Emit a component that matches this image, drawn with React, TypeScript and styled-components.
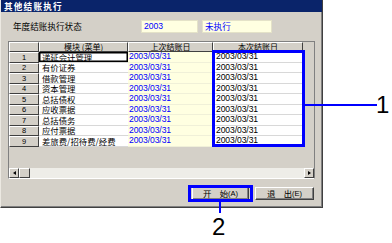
import React from "react";
import styled, {createGlobalStyle} from "styled-components";

const GlobalStyle = createGlobalStyle`
  html, body {
    margin: 0;
    padding: 0;
    background: #ffffff;
  }
  body {
    font-family: "Noto Sans CJK SC", "Liberation Sans", sans-serif;
  }
`;

const cjk = `"Noto Sans CJK SC", "Liberation Sans", sans-serif`;
const latin = `"Liberation Sans", "Noto Sans CJK SC", sans-serif`;
const face = "#d4d0c8";
const annotation = "#0000ff";

const modules = [
    "递延会计管理",
    "有价证券",
    "借款管理",
    "资本管理",
    "总括债权",
    "应收票据",
    "总括债务",
    "应付票据",
    "差旅费/招待费/经费",
];

const Stage = styled.div`
  position: relative;
  width: 392px;
  height: 243px;
  overflow: hidden;
`;

const Window = styled.div`
  box-sizing: border-box;
  width: 323px;
  height: 208px;
  display: flex;
  flex-direction: column;
  background: ${face};
  border-left: 1px solid #ece9e2;
  border-right: 1px solid #404040;
  border-bottom: 1px solid #404040;
  box-shadow: inset -1px -1px 0 #808080;
`;

const TitleBar = styled.div`
  height: 12px;
  flex: none;
  display: flex;
  align-items: center;
  padding-left: 3px;
  background: #0a246a;
  color: #ffffff;
  font-family: ${cjk};
  font-weight: bold;
  font-size: 8.6px;
  line-height: 1;
  letter-spacing: 1.2px;
`;

const Body = styled.div`
  display: flex;
  flex-direction: column;
  padding: 8px 7px 0 7px;
`;

const StatusRow = styled.div`
  display: flex;
  align-items: center;
  height: 13px;
`;

const StatusLabel = styled.div`
  width: 133px;
  padding-left: 5px;
  box-sizing: border-box;
  font-family: ${cjk};
  font-size: 8.6px;
  line-height: 1;
  color: #000000;
  white-space: nowrap;
`;

const StatusField = styled.div<{ $width: number; $latin?: boolean }>`
  box-sizing: border-box;
  width: ${p => p.$width}px;
  height: 13px;
  margin-right: 4px;
  padding-left: 2px;
  display: flex;
  align-items: center;
  background: #ffffe1;
  border: 1px solid #e4e2c8;
  color: #0000ff;
  font-family: ${p => p.$latin ? latin : cjk};
  font-size: 8.6px;
  line-height: 1;
  white-space: nowrap;
`;

const Grid = styled.div`
  box-sizing: border-box;
  margin-top: 8px;
  width: 307px;
  height: 138px;
  display: flex;
  flex-direction: column;
  background: ${face};
  border-top: 1px solid #808080;
  border-left: 1px solid #808080;
  border-right: 1px solid #808080;
  border-bottom: 1px solid #ffffff;
`;

const Table = styled.div`
  display: grid;
  grid-template-columns: 30px 89px 85px 90px;
  grid-template-rows: 10px repeat(9, 10.5px);
`;

const HeaderCell = styled.div`
  box-sizing: border-box;
  display: flex;
  align-items: center;
  justify-content: center;
  background: ${face};
  border-top: 1px solid #ffffff;
  border-left: 1px solid #ffffff;
  border-right: 1px solid #404040;
  border-bottom: 1px solid #404040;
  font-family: ${cjk};
  font-size: 8px;
  line-height: 1;
  color: #000000;
  white-space: nowrap;
  overflow: hidden;
`;

const RowNumber = styled(HeaderCell)`
  font-family: ${latin};
  font-size: 7.5px;
`;

const ModuleCell = styled.div<{ $focused?: boolean }>`
  box-sizing: border-box;
  display: flex;
  align-items: center;
  padding-left: 3px;
  background: #ffffff;
  border-bottom: 1px solid #d8d8d8;
  box-shadow: ${p => p.$focused ? "inset 0 0 0 1.5px #000000" : "none"};
  font-family: ${cjk};
  font-size: 8.4px;
  line-height: 1;
  color: #000000;
  white-space: nowrap;
  overflow: hidden;
`;

const DateCell = styled.div<{ $previous?: boolean }>`
  box-sizing: border-box;
  display: flex;
  align-items: center;
  padding-left: ${p => p.$previous ? 1 : 3}px;
  background: ${p => p.$previous ? "#ffffe1" : "#ffffff"};
  border-bottom: 1px solid ${p => p.$previous ? "#f0f0d8" : "#d8d8d8"};
  color: ${p => p.$previous ? "#0000ff" : "#000000"};
  font-family: ${latin};
  font-size: 8.6px;
  line-height: 1;
  letter-spacing: -0.1px;
  white-space: nowrap;
`;

const Filler = styled.div`
  flex: 1;
`;

const ScrollBar = styled.div`
  height: 10px;
  display: flex;
  background: #eeede8;
`;

const ScrollButton = styled.div<{ $dir: "left" | "right" }>`
  box-sizing: border-box;
  width: 10px;
  height: 10px;
  display: flex;
  align-items: center;
  justify-content: center;
  background: ${face};
  border-top: 1px solid #ffffff;
  border-left: 1px solid #ffffff;
  border-right: 1px solid #404040;
  border-bottom: 1px solid #404040;

  &::after {
    content: "";
    width: 0;
    height: 0;
    border-top: 2.5px solid transparent;
    border-bottom: 2.5px solid transparent;
    ${p => p.$dir === "left" ? "border-right: 3px solid #000;" : "border-left: 3px solid #000;"}
  }
`;

const ScrollThumb = styled.div`
  box-sizing: border-box;
  width: 11px;
  height: 10px;
  background: ${face};
  border-top: 1px solid #ffffff;
  border-left: 1px solid #ffffff;
  border-right: 1px solid #404040;
  border-bottom: 1px solid #404040;
`;

const ScrollTrack = styled.div`
  flex: 1;
`;

const ButtonRow = styled.div`
  display: flex;
  justify-content: flex-end;
  gap: 6px;
  margin-top: 8px;
  margin-right: 1px;
`;

const DialogButton = styled.button<{ $width: number }>`
  box-sizing: border-box;
  width: ${p => p.$width}px;
  height: 13px;
  padding: 0;
  margin: 0;
  display: flex;
  align-items: center;
  justify-content: center;
  background: ${face};
  border-top: 1px solid #ffffff;
  border-left: 1px solid #ffffff;
  border-right: 1px solid #404040;
  border-bottom: 1px solid #404040;
  box-shadow: inset -1px -1px 0 #808080;
  font-family: ${cjk};
  font-size: 8.4px;
  line-height: 1;
  color: #000000;
  white-space: pre;
`;

const Hotkey = styled.span`
  font-family: ${latin};
  font-size: 7.5px;
`;

const Callout = styled.div<{ $x: number; $y: number; $w: number; $h: number }>`
  position: absolute;
  box-sizing: border-box;
  left: ${p => p.$x}px;
  top: ${p => p.$y}px;
  width: ${p => p.$w}px;
  height: ${p => p.$h}px;
  border: 3px solid ${annotation};
`;

const Leader = styled.div<{ $x: number; $y: number; $w: number; $h: number }>`
  position: absolute;
  left: ${p => p.$x}px;
  top: ${p => p.$y}px;
  width: ${p => p.$w}px;
  height: ${p => p.$h}px;
  background: ${annotation};
`;

const CalloutNumber = styled.div<{ $x: number; $y: number }>`
  position: absolute;
  left: ${p => p.$x}px;
  top: ${p => p.$y}px;
  font-family: ${latin};
  font-size: 24px;
  line-height: 24px;
  color: #000000;
`;

export default function App() {
    return (
        <Stage>
            <GlobalStyle/>
            <Window>
                <TitleBar>其他结账执行</TitleBar>
                <Body>
                    <StatusRow>
                        <StatusLabel>年度结账执行状态</StatusLabel>
                        <StatusField $width={57} $latin>2003</StatusField>
                        <StatusField $width={70}>未执行</StatusField>
                    </StatusRow>
                    <Grid>
                        <Table>
                            <HeaderCell/>
                            <HeaderCell>模块 (菜单)</HeaderCell>
                            <HeaderCell>上次结账日</HeaderCell>
                            <HeaderCell>本次结账日</HeaderCell>
                            {modules.map((name, i) => (
                                <React.Fragment key={name}>
                                    <RowNumber>{i + 1}</RowNumber>
                                    <ModuleCell $focused={i === 0}>{name}</ModuleCell>
                                    <DateCell $previous>2003/03/31</DateCell>
                                    <DateCell>2003/03/31</DateCell>
                                </React.Fragment>
                            ))}
                        </Table>
                        <Filler/>
                        <ScrollBar>
                            <ScrollButton $dir="left"/>
                            <ScrollThumb/>
                            <ScrollTrack/>
                            <ScrollButton $dir="right"/>
                        </ScrollBar>
                    </Grid>
                    <ButtonRow>
                        <DialogButton $width={57}>开　始<Hotkey>(A)</Hotkey></DialogButton>
                        <DialogButton $width={59}>退　出<Hotkey>(E)</Hotkey></DialogButton>
                    </ButtonRow>
                </Body>
            </Window>

            <Callout $x={212} $y={50} $w={93} $h={97}/>
            <Leader $x={305} $y={104} $w={72} $h={2}/>
            <CalloutNumber $x={376} $y={93}>1</CalloutNumber>

            <Callout $x={188} $y={185} $w={65} $h={17}/>
            <Leader $x={219} $y={202} $w={2} $h={11}/>
            <CalloutNumber $x={212} $y={215}>2</CalloutNumber>
        </Stage>
    );
}
